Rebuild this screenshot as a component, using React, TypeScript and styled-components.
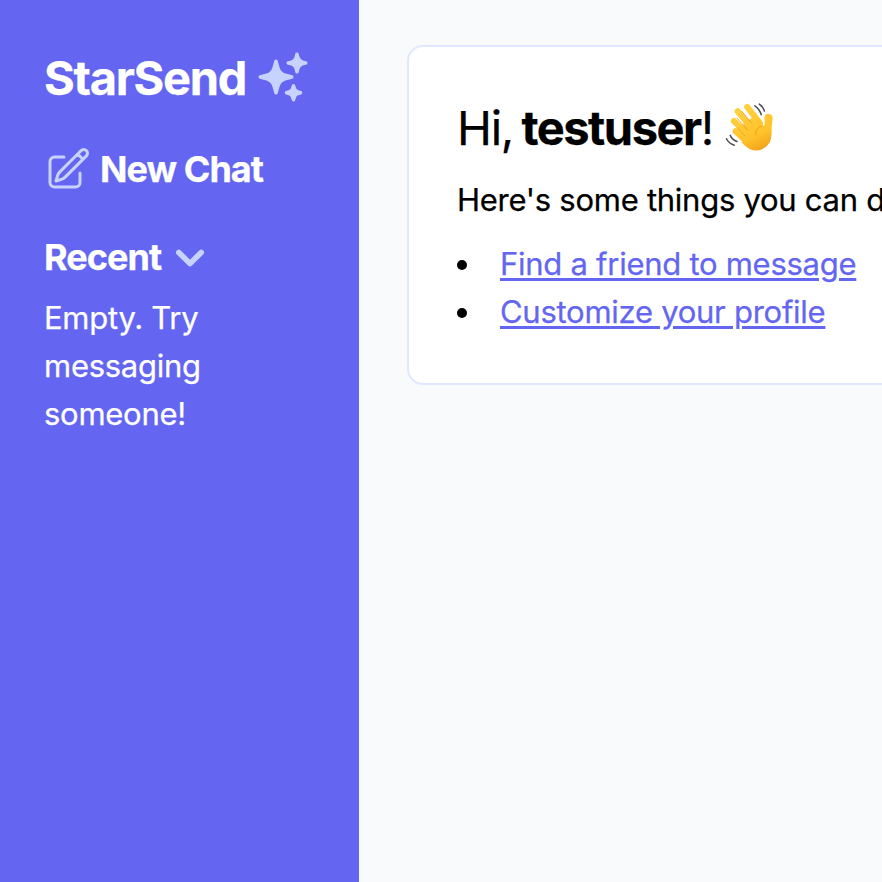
import React from "react";
import styled, { createGlobalStyle } from "styled-components";
import { HiSparkles, HiOutlinePencilSquare } from "react-icons/hi2";
import { HiChevronDown } from "react-icons/hi";

const GlobalStyle = createGlobalStyle`
  *, *::before, *::after { box-sizing: border-box; }
  body {
    margin: 0;
    overflow: hidden;
    background: #f8fafc;
    color: #000;
    font-family: Inter, "Liberation Sans", sans-serif;
    font-size: 31px;
    line-height: 48px;
    letter-spacing: -0.27px;
    -webkit-text-stroke: 0.25px currentColor;
  }
  h1, h2, p, ul { margin: 0; padding: 0; font-size: inherit; font-weight: inherit; }
`;

const Page = styled.div`
  display: flex;
  height: 100vh;
  overflow: hidden;
`;

const Sidebar = styled.aside`
  flex: 0 0 359px;
  padding: 47px 44px;
  background: #6466f1;
  color: #fff;
`;

const Brand = styled.h1`
  display: flex;
  align-items: center;
  gap: 9px;
  height: 60px;
  font-size: 47px;
  font-weight: 650;
  letter-spacing: -1.27px;
  span { padding-top: 2px; }
  svg { color: #c7d2fe; }
`;

const SidebarAction = styled.div<{ $top: number; $gap: number }>`
  display: flex;
  align-items: center;
  gap: ${(p) => p.$gap}px;
  height: 56px;
  margin-top: ${(p) => p.$top}px;
  font-size: 36px;
  font-weight: 650;
  letter-spacing: -0.95px;
  svg { color: #c7d2fe; }
`;

const RecentChevron = styled(HiChevronDown)`
  margin-top: 2px;
`;

const EmptyNote = styled.p`
  width: 200px;
  margin-top: 9px;
`;

const Main = styled.main`
  flex: 1;
  min-width: 0;
  padding: 45px 0 0 48px;
`;

const Card = styled.section`
  width: 700px;
  height: 340px;
  padding: 48px;
  border: 2px solid #e0e7ff;
  border-radius: 16px;
  background: #fff;
`;

const Greeting = styled.h2`
  display: flex;
  align-items: center;
  height: 66px;
  font-size: 47px;
  letter-spacing: -1.3px;
  white-space: pre;
  strong { margin-left: -3.5px; font-weight: 650; letter-spacing: -1.45px; }
`;

const Intro = styled.p`
  margin-top: 15px;
  white-space: nowrap;
`;

const Suggestions = styled.ul`
  margin-top: 16px;
  list-style: none;
`;

const Suggestion = styled.li`
  display: flex;
  align-items: center;
  &::before {
    content: "";
    width: 10px;
    height: 10px;
    margin: 2px 33px 0 0;
    border-radius: 50%;
    background: #000;
  }
`;

const TextLink = styled.a`
  color: #6466f1;
  text-decoration: underline;
  text-decoration-thickness: 3px;
  text-underline-offset: 3px;
`;

const Wave = styled.svg`
  width: 61px;
  height: 61px;
  margin: -6px 0 0 6px;
`;

function WavingHand() {
  return (
    <Wave viewBox="0 0 180 180" fill="none" strokeLinecap="round" strokeLinejoin="round">
      <defs>
        <linearGradient id="skin" x1="70" y1="30" x2="130" y2="165" gradientUnits="userSpaceOnUse">
          <stop stopColor="#ffd13f" />
          <stop offset=".65" stopColor="#ffc32c" />
          <stop offset="1" stopColor="#efa019" />
        </linearGradient>
      </defs>
      <path
        d="M72 84 L110 58 L130 91 C136 91 135 81 134 71 C133 57 142 52 151 57 C160 61 159 70 157 81 C154 94 157 108 154 125 C151 151 125 168 101 163 C88 160 78 151 67 140 Z"
        fill="url(#skin)"
      />
      <g stroke="url(#skin)" strokeWidth="18">
        <path d="M83 35 L121 84" />
        <path d="M55 48 L100 101" />
        <path d="M44 77 L89 120" />
        <path d="M49 107 L82 137" />
      </g>
      <g stroke="#e99b17" strokeWidth="2.5">
        <path d="M67 48 L96 83" />
        <path d="M53 68 L85 104" />
        <path d="M54 97 L76 120" />
        <path d="M126 92 C113 95 106 107 109 118" />
      </g>
      <g stroke="#4b4d50" strokeWidth="4.5">
        <path d="M106 32 C115 38 121 47 125 58" />
        <path d="M119 27 C126 32 131 38 134 47" />
        <path d="M22 129 C27 139 35 145 45 148" />
        <path d="M33 119 C37 128 44 134 53 137" />
      </g>
    </Wave>
  );
}

export default function App() {
  return (
    <>
      <GlobalStyle />
      <Page>
        <Sidebar>
          <Brand>
            <span>StarSend</span>
            <HiSparkles size={56} />
          </Brand>
          <SidebarAction $top={34} $gap={8}>
            <HiOutlinePencilSquare size={48} />
            New Chat
          </SidebarAction>
          <SidebarAction $top={32} $gap={1}>
            Recent
            <RecentChevron size={56} />
          </SidebarAction>
          <EmptyNote>Empty. Try messaging someone!</EmptyNote>
        </Sidebar>
        <Main>
          <Card>
            <Greeting>
              Hi, <strong>testuser</strong>!
              <WavingHand />
            </Greeting>
            <Intro>Here's some things you can do:</Intro>
            <Suggestions>
              <Suggestion><TextLink href="#">Find a friend to message</TextLink></Suggestion>
              <Suggestion><TextLink href="#">Customize your profile</TextLink></Suggestion>
            </Suggestions>
          </Card>
        </Main>
      </Page>
    </>
  );
}
